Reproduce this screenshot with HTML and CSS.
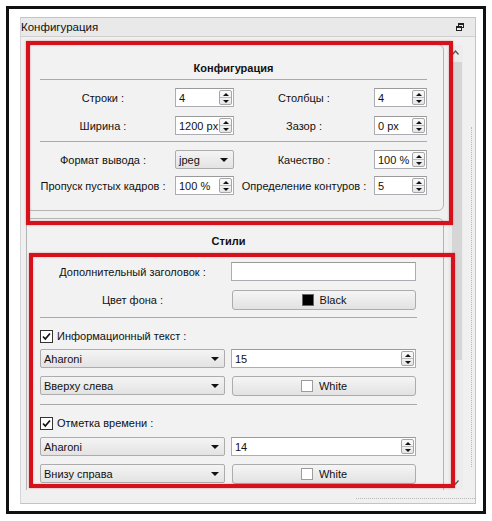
FILE: index.html
```html
<!DOCTYPE html>
<html>
<head>
  <title>Конфигурация</title>
  <link rel="stylesheet" href="styles.css">
</head>
<body>
  <div class="frame">
    <div class="dock">
      <div class="dock-title">
        <span>Конфигурация</span>
        <svg class="float-icon" width="8" height="8" viewBox="0 0 8 8">
          <rect x="2.5" y="0.5" width="5" height="4" fill="none" stroke="#222"/>
          <rect x="0.5" y="3.5" width="5" height="4" fill="#ececec" stroke="#222"/>
          <line x1="0.5" y1="4.5" x2="5.5" y2="4.5" stroke="#222"/>
          <line x1="2.5" y1="1.5" x2="7.5" y2="1.5" stroke="#222"/>
        </svg>
      </div>

      <div class="dock-body">
        <div class="dock-main">
          <div class="scroll-area">

            <!-- Configuration group -->
            <div class="group config">
              <div class="group-title">Конфигурация</div>
              <div class="sep"></div>
              <div class="grid4">
                <label>Строки :</label>
                <div class="spin"><span class="val">4</span><span class="btns"><i class="up"></i><i class="down"></i></span></div>
                <label>Столбцы :</label>
                <div class="spin"><span class="val">4</span><span class="btns"><i class="up"></i><i class="down"></i></span></div>

                <label>Ширина :</label>
                <div class="spin"><span class="val">1200 px</span><span class="btns"><i class="up"></i><i class="down"></i></span></div>
                <label>Зазор :</label>
                <div class="spin"><span class="val">0 px</span><span class="btns"><i class="up"></i><i class="down"></i></span></div>
              </div>
              <div class="sep sep-mid"></div>
              <div class="grid4 grid4-b">
                <label>Формат вывода :</label>
                <div class="combo"><span>jpeg</span><i class="arrow"></i></div>
                <label>Качество :</label>
                <div class="spin"><span class="val">100 %</span><span class="btns"><i class="up"></i><i class="down"></i></span></div>

                <label>Пропуск пустых кадров :</label>
                <div class="spin"><span class="val">100 %</span><span class="btns"><i class="up"></i><i class="down"></i></span></div>
                <label>Определение контуров :</label>
                <div class="spin"><span class="val">5</span><span class="btns"><i class="up"></i><i class="down"></i></span></div>
              </div>
            </div>

            <!-- Styles group -->
            <div class="group styles">
              <div class="group-title">Стили</div>
              <div class="grid2 grid2-top">
                <label>Дополнительный заголовок :</label>
                <div class="text-input"></div>
                <label>Цвет фона :</label>
                <div class="btn"><span class="swatch black"></span>Black</div>
              </div>
              <div class="sep"></div>

              <div class="check-row"><span class="check"><svg width="11" height="11" viewBox="0 0 11 11"><path d="M2 5.5 L4.3 8 L9 2.5" fill="none" stroke="#111" stroke-width="1.7"/></svg></span>Информационный текст :</div>
              <div class="grid2 grid2-font">
                <div class="combo"><span>Aharoni</span><i class="arrow"></i></div>
                <div class="spin"><span class="val">15</span><span class="btns"><i class="up"></i><i class="down"></i></span></div>
                <div class="combo"><span>Вверху слева</span><i class="arrow"></i></div>
                <div class="btn"><span class="swatch white"></span>White</div>
              </div>
              <div class="sep sep-second"></div>

              <div class="check-row"><span class="check"><svg width="11" height="11" viewBox="0 0 11 11"><path d="M2 5.5 L4.3 8 L9 2.5" fill="none" stroke="#111" stroke-width="1.7"/></svg></span>Отметка времени :</div>
              <div class="grid2 grid2-font grid2-last">
                <div class="combo"><span>Aharoni</span><i class="arrow"></i></div>
                <div class="spin"><span class="val">14</span><span class="btns"><i class="up"></i><i class="down"></i></span></div>
                <div class="combo"><span>Внизу справа</span><i class="arrow"></i></div>
                <div class="btn"><span class="swatch white"></span>White</div>
              </div>
            </div>

          </div>

          <div class="scrollbar">
            <div class="sb-arrow">
              <svg width="7" height="5" viewBox="0 0 7 5"><polyline points="0.5,4.5 3.5,1 6.5,4.5" fill="none" stroke="#555" stroke-width="1.3"/></svg>
            </div>
            <div class="sb-thumb"></div>
            <div class="sb-track"></div>
            <div class="sb-arrow">
              <svg width="7" height="5" viewBox="0 0 7 5"><polyline points="0.5,0.5 3.5,4 6.5,0.5" fill="none" stroke="#555" stroke-width="1.3"/></svg>
            </div>
          </div>

          <div class="grip"><div class="grip-line"></div></div>
        </div>
        <div class="dock-foot"><div class="foot-line"></div></div>
      </div>
    </div>
  </div>

  <!-- red annotation frames drawn over the screenshot -->
  <div class="mark mark-config"></div>
  <div class="mark mark-styles"></div>
</body>
</html>
```

FILE: styles.css
```css
body {
  margin: 0;
  background: #fff;
  font-family: "Liberation Sans", Arial, sans-serif;
  font-size: 11px;
  color: #111;
}

.frame {
  margin: 6px 0 0 6px;
  width: 480px;
  height: 508px;
  border: 3px solid #111;
  box-sizing: border-box;
  padding: 8px 0 0 11px;
}

.dock {
  width: 456px;
  height: 487px;
  box-sizing: border-box;
  border: 1px solid #c4c4c4;
  border-left-color: #d6d6d6;
  background: #f0f0f0;
  display: flex;
  flex-direction: column;
}

.dock-title {
  height: 19px;
  box-sizing: border-box;
  border-bottom: 1px solid #cfcfcf;
  background: #e9e9e9;
  display: flex;
  align-items: center;
  justify-content: space-between;
  padding: 0 11px 0 0;
  font-size: 11.5px;
}

.float-icon {
  display: block;
}

.dock-body {
  flex: 1;
  display: flex;
  flex-direction: column;
}

.dock-main {
  height: 453px;
  display: flex;
}

.scroll-area {
  width: 427px;
  box-sizing: border-box;
  padding: 7px 0 0 5px;
  overflow: hidden;
}

.group {
  width: 418px;
  box-sizing: border-box;
  border: 1px solid #b4b4b4;
  border-radius: 6px;
  background: #f2f2f2;
}

.group-title {
  height: 18px;
  line-height: 18px;
  text-align: center;
  font-weight: bold;
}

.sep {
  border-top: 1px solid #a9a9a9;
}

/* configuration block */
.config {
  height: 167px;
  padding: 0 16px 0 13px;
}

.config .group-title {
  margin-top: 14px;
}

.config .sep {
  margin-top: 2px;
}

.config .sep.sep-mid {
  margin-top: 6px;
}

.grid4 {
  display: grid;
  grid-template-columns: 135px 59px 140px 53px;
  grid-auto-rows: 19px;
  row-gap: 9px;
  margin-top: 8px;
}

.grid4.grid4-b {
  row-gap: 7px;
}

.grid4 label,
.grid2 label {
  display: flex;
  align-items: center;
  justify-content: center;
  white-space: nowrap;
}

.grid4 label:nth-child(4n+1) {
  padding-right: 9px;
}

.grid4 label:nth-child(4n+3) {
  padding: 0 6px;
}

/* styles block */
.styles {
  height: 300px;
  margin-top: 7px;
  padding: 0 26px 0 13px;
}

.styles .group-title {
  margin-top: 13px;
}

.grid2 {
  display: grid;
  grid-template-columns: 185px 185px;
  column-gap: 6px;
  grid-auto-rows: 19px;
  row-gap: 9px;
}

.grid2-top {
  margin-top: 12px;
  margin-bottom: 8px;
}

.grid2-font {
  margin-top: 5px;
  row-gap: 8px;
}

.grid2-last {
  margin-top: 6px;
}

.sep.sep-second {
  margin-top: 9px;
}

.check-row {
  margin-top: 10px;
  height: 16px;
  display: flex;
  align-items: center;
  gap: 4px;
}

.check {
  width: 13px;
  height: 13px;
  box-sizing: border-box;
  border: 1px solid #333;
  background: #fff;
  display: flex;
  align-items: center;
  justify-content: center;
}

.check svg {
  display: block;
}

/* controls */
.spin,
.text-input {
  height: 19px;
  box-sizing: border-box;
  border: 1px solid #abadb3;
  border-top-color: #9a9a9a;
  background: #fff;
}

.spin {
  display: flex;
  align-items: center;
  padding-left: 3px;
}

.spin .val {
  flex: 1;
  white-space: nowrap;
  overflow: hidden;
}

.btns {
  width: 13px;
  height: 15px;
  margin-right: 1px;
  box-sizing: border-box;
  border: 1px solid #a6a6a6;
  border-radius: 2px;
  background: linear-gradient(#fafafa, #e6e6e6);
  display: flex;
  flex-direction: column;
}

.btns i {
  flex: 1;
  display: flex;
  align-items: center;
  justify-content: center;
}

.btns i + i {
  border-top: 1px solid #bdbdbd;
}

.btns i::after {
  content: "";
  border-left: 3px solid transparent;
  border-right: 3px solid transparent;
}

.btns .up::after {
  border-bottom: 3px solid #111;
}

.btns .down::after {
  border-top: 3px solid #111;
}

.combo {
  height: 19px;
  box-sizing: border-box;
  border: 1px solid #acacac;
  border-radius: 2px;
  background: linear-gradient(#f4f4f4, #e3e3e3);
  display: flex;
  align-items: center;
  justify-content: space-between;
  padding: 0 5px 0 3px;
}

.arrow {
  border-left: 4px solid transparent;
  border-right: 4px solid transparent;
  border-top: 4px solid #111;
}

.btn {
  height: 20px;
  box-sizing: border-box;
  border: 1px solid #acacac;
  border-radius: 3px;
  background: linear-gradient(#f5f5f5, #e2e2e2);
  display: flex;
  align-items: center;
  justify-content: center;
  gap: 6px;
  margin-left: 1px;
}

.swatch {
  width: 12px;
  height: 12px;
  box-sizing: border-box;
}

.swatch.black {
  background: #000;
  border: 1px solid #666;
}

.swatch.white {
  background: #fff;
  border: 1px solid #9c9c9c;
}

/* scrollbar + grip */
.scrollbar {
  width: 15px;
  margin-top: 8px;
  display: flex;
  flex-direction: column;
  background: #ececec;
}

.sb-arrow {
  height: 15px;
  display: flex;
  align-items: center;
  justify-content: center;
}

.sb-arrow svg {
  display: block;
}

.sb-thumb {
  height: 298px;
  margin: 2px 1px 0 4px;
  background: #d6d6d6;
}

.sb-track {
  flex: 1;
}

.grip {
  width: 12px;
  padding-top: 90px;
  box-sizing: border-box;
}

.grip-line {
  margin-left: 8px;
  height: 340px;
  border-left: 1px dotted #b8b8b8;
}

.dock-foot {
  padding-top: 8px;
}

.foot-line {
  margin-left: 335px;
  border-top: 1px dotted #b8b8b8;
}

/* annotation overlays */
.mark {
  position: absolute;
  box-sizing: border-box;
  border: 4px solid #d4121b;
  box-shadow: 0 0 2px rgba(212, 18, 27, 0.45), inset 0 0 2px rgba(212, 18, 27, 0.45);
}

.mark-config {
  left: 26px;
  top: 41px;
  width: 427px;
  height: 184px;
}

.mark-styles {
  left: 29px;
  top: 253px;
  width: 426px;
  height: 235px;
}
```
